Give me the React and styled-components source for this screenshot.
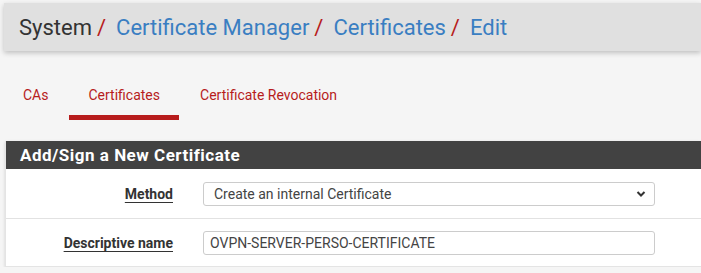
import React from 'react';
import styled, { createGlobalStyle } from 'styled-components';

const GlobalStyle = createGlobalStyle`
  body {
    margin: 0;
    background: #f5f5f5;
    font-family: Roboto, "Liberation Sans", sans-serif;
    overflow: hidden;
  }
`;

const Page = styled.div`
  padding: 3px 0 0 4px;
`;

const Breadcrumb = styled.div`
  height: 48px;
  background: #e0e0e0;
  box-shadow: 0 2px 5px rgba(0, 0, 0, 0.22);
  display: flex;
  align-items: center;
  padding-left: 15px;
  font-size: 22px;
  color: #333;
`;

const Crumb = styled.span`
  color: ${p => (p.link ? '#3a7ec2' : '#333')};
`;

const Sep = styled.span`
  color: #b71c1c;
  margin: 0 10px 0 5px;
`;

const Tabs = styled.ul`
  list-style: none;
  margin: 22px 0 0;
  padding: 0;
  display: flex;
`;

const Tab = styled.li`
  margin-right: 2px;
  padding: 12px 19px 10px;
  line-height: 20px;
  font-size: 14px;
  color: #b71c1c;
  border-bottom: 5px solid ${p => (p.active ? '#b71c1c' : 'transparent')};
`;

const Panel = styled.div`
  margin-top: 21px;
  margin-left: 1px;
  background: #fff;
  border: 1px solid #e4e4e4;
  border-right: none;
  border-top: none;
  box-shadow: 0 1px 3px rgba(0, 0, 0, 0.15);
`;

const PanelHeading = styled.div`
  background: #424242;
  color: #fff;
  height: 28px;
  display: flex;
  align-items: center;
  padding-left: 14px;
  font-size: 17px;
  font-weight: bold;
  letter-spacing: 0.5px;
`;

const Row = styled.div`
  display: grid;
  grid-template-columns: 167px 1fr;
  column-gap: 30px;
  align-items: center;
  height: ${p => p.h}px;
  border-top: ${p => (p.first ? 'none' : '1px solid #e2e2e2')};
`;

const Label = styled.span`
  justify-self: end;
  font-size: 14px;
  font-weight: bold;
  color: #333;
  text-decoration: underline;
  text-underline-offset: 3px;
`;

const Field = styled.div`
  padding-right: 46px;
  display: flex;
`;

const Select = styled.div`
  flex: 1;
  height: 24px;
  box-sizing: border-box;
  border: 1px solid #ccc;
  border-radius: 3px;
  display: flex;
  align-items: center;
  justify-content: space-between;
  padding: 0 8px 0 10px;
  font-size: 14px;
  color: #444;
`;

const Input = styled(Select)`
  padding-left: 6px;
`;

const Chevron = () => (
  <svg width="10" height="8" viewBox="0 0 10 8">
    <path d="M1.5 2 L5 5.5 L8.5 2" fill="none" stroke="#333" strokeWidth="2" />
  </svg>
);

const App = () => (
  <Page>
    <GlobalStyle />
    <Breadcrumb>
      <Crumb>System</Crumb>
      <Sep>/</Sep>
      <Crumb link>Certificate Manager</Crumb>
      <Sep>/</Sep>
      <Crumb link>Certificates</Crumb>
      <Sep>/</Sep>
      <Crumb link>Edit</Crumb>
    </Breadcrumb>
    <Tabs>
      <Tab>CAs</Tab>
      <Tab active>Certificates</Tab>
      <Tab>Certificate Revocation</Tab>
    </Tabs>
    <Panel>
      <PanelHeading>Add/Sign a New Certificate</PanelHeading>
      <Row first h={49}>
        <Label>Method</Label>
        <Field>
          <Select>
            Create an internal Certificate
            <Chevron />
          </Select>
        </Field>
      </Row>
      <Row h={47}>
        <Label>Descriptive name</Label>
        <Field>
          <Input>OVPN-SERVER-PERSO-CERTIFICATE</Input>
        </Field>
      </Row>
    </Panel>
  </Page>
);

export default App;
